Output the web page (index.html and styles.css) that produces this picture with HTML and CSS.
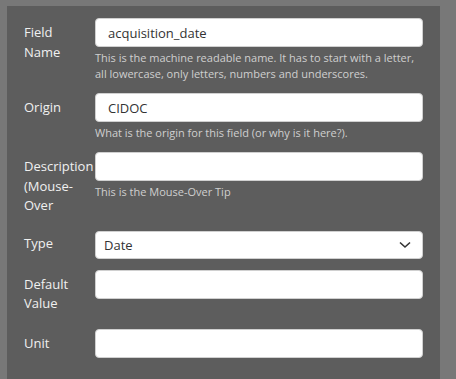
FILE: index.html
```html
<!DOCTYPE html>
<html>
<head>
<meta charset="utf-8">
<link rel="stylesheet" href="styles.css">
</head>
<body>
<div class="panel">
  <div class="row">
    <label class="lbl">Field Name</label>
    <div class="ctl">
      <input class="inp" type="text" value="acquisition_date">
      <div class="help">This is the machine readable name. It has to start with a letter, all lowercase, only letters, numbers and underscores.</div>
    </div>
  </div>
  <div class="row">
    <label class="lbl">Origin</label>
    <div class="ctl">
      <input class="inp" type="text" value="CIDOC">
      <div class="help">What is the origin for this field (or why is it here?).</div>
    </div>
  </div>
  <div class="row">
    <label class="lbl">Description (Mouse-Over</label>
    <div class="ctl">
      <input class="inp" type="text" value="">
      <div class="help">This is the Mouse-Over Tip</div>
    </div>
  </div>
  <div class="row">
    <label class="lbl lbl-one">Type</label>
    <div class="ctl">
      <div class="sel">
        <span>Date</span>
        <svg class="chev" width="12" height="8" viewBox="0 0 12 8"><path d="M1 1.5 L6 6 L11 1.5" fill="none" stroke="#333" stroke-width="1.6"/></svg>
      </div>
    </div>
  </div>
  <div class="row">
    <label class="lbl">Default Value</label>
    <div class="ctl">
      <input class="inp" type="text" value="">
    </div>
  </div>
  <div class="row">
    <label class="lbl">Unit</label>
    <div class="ctl">
      <input class="inp" type="text" value="">
    </div>
  </div>
</div>
</body>
</html>
```
FILE: styles.css
```css
html, body {
  margin: 0;
  padding: 0;
  background: #787878;
  height: 100%;
  overflow: hidden;
}
body {
  font-family: "Open Sans", "DejaVu Sans", sans-serif;
  padding: 6px 16px 0 7px;
  box-sizing: border-box;
}
.panel {
  background: #5d5d5d;
  padding: 12px 17px 0 17px;
  height: 100%;
  box-sizing: border-box;
}
.row {
  display: flex;
  margin-bottom: 11px;
}
.lbl {
  width: 71px;
  flex: none;
  box-sizing: border-box;
  padding-right: 8px;
  color: #f0f0f0;
  font-size: 13px;
  line-height: 19.5px;
  padding-top: 5px;
  padding-bottom: 4px;
}
.lbl-one {
  padding-top: 3px;
}
.ctl {
  flex: 1;
  min-width: 0;
}
.inp {
  display: block;
  width: 100%;
  box-sizing: border-box;
  height: 29px;
  border: 1px solid #d0d0d0;
  border-radius: 4px;
  background: #fff;
  padding: 0 12px;
  font-family: "Open Sans", sans-serif;
  font-size: 13px;
  color: #333;
  outline: none;
  margin: 0;
}
.sel {
  display: flex;
  align-items: center;
  justify-content: space-between;
  height: 28px;
  box-sizing: border-box;
  border: 1px solid #d0d0d0;
  border-radius: 4px;
  background: #fff;
  padding: 0 11px 0 8px;
  font-size: 13px;
  color: #333;
}
.chev {
  display: block;
}
.help {
  margin-top: 3px;
  font-size: 11px;
  line-height: 16px;
  color: #cfcfcf;
}
```
